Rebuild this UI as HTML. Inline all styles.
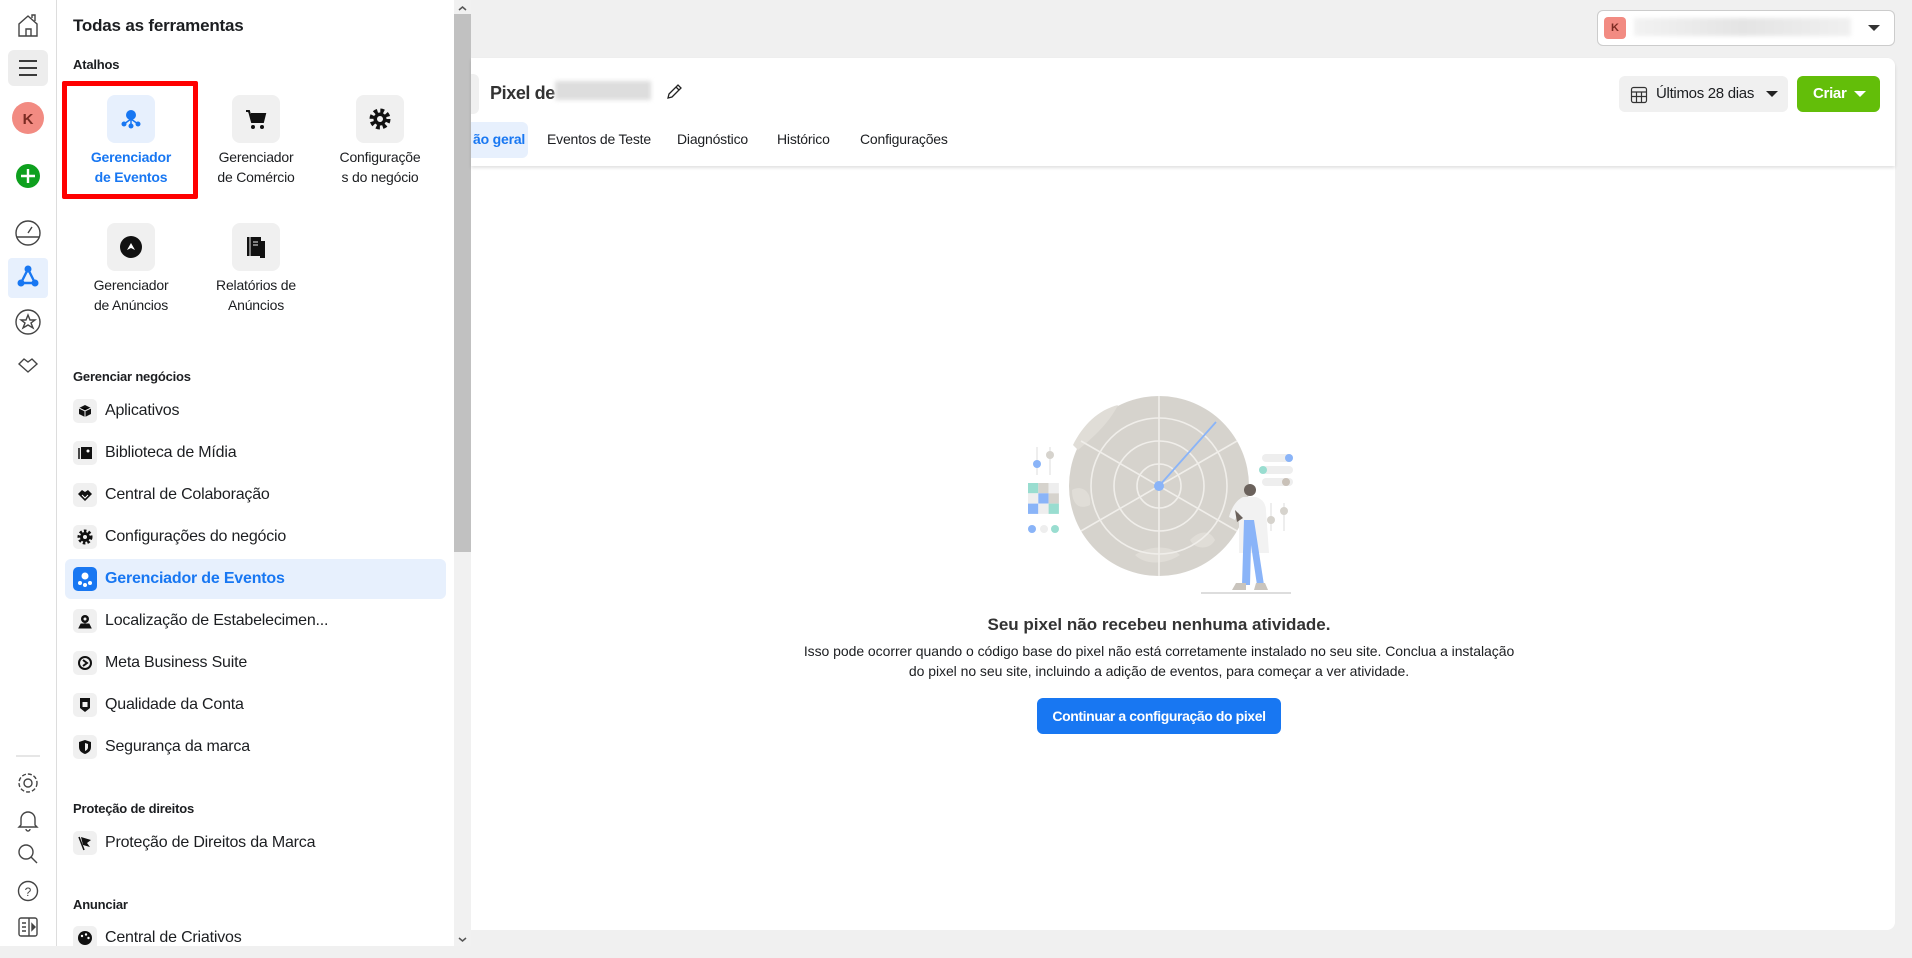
<!DOCTYPE html>
<html><head><meta charset="utf-8"><style>
*{box-sizing:border-box;margin:0;padding:0}
body{width:1912px;height:946px;overflow:hidden;background:#f0f0f0;font-family:"Liberation Sans",sans-serif;color:#1c1e21;position:relative}
.abs{position:absolute}
.rail{left:0;top:0;width:57px;height:946px;background:#fff;border-right:1px solid #ddd}
.drawer{left:57px;top:0;width:397px;height:946px;background:#fff}
.sb{left:454px;top:0;width:17px;height:946px;background:#f1f1f1}
.thumb{left:454px;top:14px;width:17px;height:538px;background:#c1c1c1}
.card{left:471px;top:58px;width:1424px;height:872px;background:#fff;border-radius:0 8px 8px 0}
.hdr{left:471px;top:58px;width:1424px;height:108px;background:#fff;box-shadow:0 2px 3px rgba(0,0,0,.12);border-radius:0 8px 0 0}
.tile{width:48px;height:48px;border-radius:8px;background:#f0f0f0;display:flex;align-items:center;justify-content:center}
.tlab{width:130px;text-align:center;font-size:14px;line-height:20px;color:#1c1e21;letter-spacing:-.2px}
.sec{left:73px;font-size:13px;font-weight:bold;letter-spacing:-.2px}
.item{left:65px;width:381px;height:40px;border-radius:6px;display:flex;align-items:center;padding-left:8px;font-size:16px;letter-spacing:-.2px}
.item .ic{width:24px;height:24px;border-radius:5px;background:#f0f0f0;margin-right:8px;display:flex;align-items:center;justify-content:center}
.tab{top:131px;font-size:14px;color:#1c1e21;letter-spacing:-.2px}
</style></head><body>
<div class="abs rail"></div>
<svg class="abs" style="left:0;top:0" width="57" height="946" fill="none" stroke="#444" stroke-width="1.4">
<path d="M19 36V24l9-8 9 8v12zM26 36v-7h5v7M32 18v-3h3v6"/>
<rect x="8" y="50" width="40" height="36" rx="6" fill="#ededed" stroke="none"/>
<path d="M19 61h18M19 68h18M19 75h18" stroke="#222" stroke-width="1.8"/>
<circle cx="28" cy="118" r="16" fill="#f28b82" stroke="none"/>
<text x="28" y="124" font-size="15" font-weight="bold" fill="#7a2b22" stroke="none" text-anchor="middle" font-family="Liberation Sans">K</text>
<circle cx="28" cy="176" r="12" fill="#0ea01e" stroke="none"/>
<path d="M28 169v14M21 176h14" stroke="#fff" stroke-width="2.4"/>
<circle cx="28" cy="233" r="12"/><path d="M17 237h22M28 233l4-6"/>
<rect x="8" y="258" width="40" height="40" rx="4" fill="#e7f0fd" stroke="none"/>
<path d="M28 269l-7 14h14z" stroke="#1877f2" stroke-width="2.4"/>
<circle cx="28" cy="269" r="3.5" fill="#1877f2" stroke="none"/><circle cx="21" cy="283" r="3.5" fill="#1877f2" stroke="none"/><circle cx="35" cy="283" r="3.5" fill="#1877f2" stroke="none"/>
<circle cx="28" cy="322" r="12"/><path d="M28 315l2 5h5l-4 3 2 5-5-3-5 3 2-5-4-3h5z"/>
<path d="M19 364l5-5 4 3 4-3 5 5-9 8z"/>
<path d="M16 756h24" stroke="#ddd"/>
<circle cx="28" cy="783" r="4"/><circle cx="28" cy="783" r="9" stroke-dasharray="4 2"/>
<path d="M21 825v-6a7 7 0 0 1 14 0v6l2 2H19zM26 829a2 2 0 0 0 4 0"/>
<circle cx="26" cy="852" r="7"/><path d="M31 857l6 6"/>
<circle cx="28" cy="891" r="9.5"/><text x="28" y="896" font-size="12" fill="#444" stroke="none" text-anchor="middle" font-family="Liberation Sans">?</text>
<rect x="19" y="918" width="18" height="18" rx="2"/><path d="M29 918v18M22 923h4M22 927h4M22 931h4"/><path d="M32 924l3 3-3 3z" fill="#444"/>
</svg>

<div class="abs drawer"></div>
<div class="abs sb"></div><div class="abs thumb"></div>
<svg class="abs" style="left:454px;top:0" width="17" height="946"><path d="M5 10l3.5-3 3.5 3" stroke="#555" fill="none" stroke-width="1.5"/><path d="M5 938l3.5 3 3.5-3" stroke="#555" fill="none" stroke-width="1.5"/></svg>

<div class="abs" style="left:73px;top:16px;font-size:17px;font-weight:bold;letter-spacing:-.2px">Todas as ferramentas</div>
<div class="abs sec" style="top:57px">Atalhos</div>

<div class="abs" style="left:62px;top:81px;width:136px;height:118px;border:5px solid #f00;border-radius:2px"></div>
<div class="abs tile" style="left:107px;top:95px;background:#e7f0fd"><svg width="24" height="24"><circle cx="12" cy="8" r="5" fill="#1877f2"/><path d="M12 12v7M12 12l-7 5M12 12l7 5" stroke="#1877f2" stroke-width="1.5"/><circle cx="5" cy="17" r="2.5" fill="#1877f2"/><circle cx="19" cy="17" r="2.5" fill="#1877f2"/><circle cx="12" cy="19" r="2.5" fill="#1877f2"/></svg></div>
<div class="abs tlab" style="left:66px;top:147px;color:#1877f2;font-weight:bold">Gerenciador<br>de Eventos</div>
<div class="abs tile" style="left:232px;top:95px"><svg width="24" height="24"><path d="M2 4h3l3 11h11l2-8H7" fill="#111" stroke="#111" stroke-width="2"/><circle cx="9" cy="20" r="2" fill="#111"/><circle cx="18" cy="20" r="2" fill="#111"/></svg></div>
<div class="abs tlab" style="left:191px;top:147px">Gerenciador<br>de Comércio</div>
<div class="abs tile" style="left:356px;top:95px"><svg width="24" height="24"><circle cx="12" cy="12" r="8" fill="none" stroke="#111" stroke-width="5" stroke-dasharray="3.5 2.8"/><circle cx="12" cy="12" r="6.5" fill="#111"/><circle cx="12" cy="12" r="3" fill="#f0f0f0"/></svg></div>
<div class="abs tlab" style="left:315px;top:147px">Configuraçõe<br>s do negócio</div>
<div class="abs tile" style="left:107px;top:223px"><svg width="24" height="24"><circle cx="12" cy="12" r="11" fill="#111"/><path d="M8 15l4-7 4 7-4-2z" fill="#fff"/></svg></div>
<div class="abs tlab" style="left:66px;top:275px">Gerenciador<br>de Anúncios</div>
<div class="abs tile" style="left:232px;top:223px"><svg width="24" height="24"><rect x="3" y="2" width="14" height="19" fill="#111"/><rect x="16" y="6" width="5" height="17" fill="#111"/><path d="M6 2v19M9 7h5M9 10h5" stroke="#f0f0f0"/></svg></div>
<div class="abs tlab" style="left:191px;top:275px">Relatórios de<br>Anúncios</div>

<div class="abs sec" style="top:369px">Gerenciar negócios</div>
<div class="abs item" style="top:391px"><span class="ic"><svg width="14" height="14"><path d="M7 1l6 3v6l-6 3-6-3V4z" fill="#111"/><path d="M1 4l6 3 6-3M7 7v6" stroke="#f0f0f0"/></svg></span>Aplicativos</div>
<div class="abs item" style="top:433px"><span class="ic"><svg width="14" height="14"><rect x="3" y="1" width="11" height="12" fill="#111"/><path d="M1 2v11" stroke="#111" stroke-width="1.5"/><circle cx="10" cy="5" r="1.5" fill="#fff"/></svg></span>Biblioteca de Mídia</div>
<div class="abs item" style="top:475px"><span class="ic"><svg width="16" height="14"><path d="M1 6l4-4 3 2 3-2 4 4-7 7z" fill="#111"/><path d="M5 7l3 3 3-3" stroke="#fff" fill="none"/></svg></span>Central de Colaboração</div>
<div class="abs item" style="top:517px"><span class="ic"><svg width="16" height="16"><circle cx="8" cy="8" r="6" fill="none" stroke="#111" stroke-width="3" stroke-dasharray="2.5 2"/><circle cx="8" cy="8" r="5" fill="#111"/><circle cx="8" cy="8" r="2" fill="#f0f0f0"/></svg></span>Configurações do negócio</div>
<div class="abs item" style="top:559px;background:#e7f0fd;color:#1877f2;font-weight:bold"><span class="ic" style="background:#1877f2"><svg width="16" height="16"><circle cx="8" cy="5" r="3.5" fill="#fff"/><circle cx="3" cy="12" r="2" fill="#fff"/><circle cx="13" cy="12" r="2" fill="#fff"/><circle cx="8" cy="14" r="2" fill="#fff"/></svg></span>Gerenciador de Eventos</div>
<div class="abs item" style="top:601px"><span class="ic"><svg width="16" height="16"><circle cx="8" cy="6" r="4" fill="#111"/><circle cx="8" cy="6" r="1.5" fill="#f0f0f0"/><path d="M8 11v-2M2 15h12l-2-4H4z" fill="#111" stroke="#111"/></svg></span>Localização de Estabelecimen...</div>
<div class="abs item" style="top:643px"><span class="ic"><svg width="16" height="16"><circle cx="8" cy="8" r="6" fill="none" stroke="#111" stroke-width="2"/><path d="M6 5l4 3-4 3" stroke="#111" stroke-width="2" fill="none"/></svg></span>Meta Business Suite</div>
<div class="abs item" style="top:685px"><span class="ic"><svg width="16" height="16"><path d="M3 1h10v10l-5 4-5-4z" fill="#111"/><rect x="5.5" y="5" width="5" height="5" fill="#f0f0f0"/></svg></span>Qualidade da Conta</div>
<div class="abs item" style="top:727px"><span class="ic"><svg width="16" height="16"><path d="M8 1l6 2v5c0 4-3 6-6 7-3-1-6-3-6-7V3z" fill="#111"/><path d="M8 4l3 1v3c0 2-1 3-3 4z" fill="#f0f0f0"/></svg></span>Segurança da marca</div>

<div class="abs sec" style="top:801px">Proteção de direitos</div>
<div class="abs item" style="top:823px"><span class="ic"><svg width="16" height="16"><path d="M2 2l5 13" stroke="#111" stroke-width="1.5"/><path d="M4 2l10 3-4 3 3 4-7-2z" fill="#111"/></svg></span>Proteção de Direitos da Marca</div>
<div class="abs sec" style="top:897px">Anunciar</div>
<div class="abs item" style="top:918px"><span class="ic"><svg width="16" height="16"><circle cx="8" cy="8" r="7" fill="#111"/><circle cx="5" cy="6" r="1.2" fill="#fff"/><circle cx="9" cy="4.5" r="1.2" fill="#fff"/><circle cx="11.5" cy="8" r="1.2" fill="#fff"/></svg></span>Central de Criativos</div>

<!-- main -->
<div class="abs" style="left:1597px;top:10px;width:298px;height:36px;background:#fff;border:1px solid #ccc;border-radius:6px"></div>
<div class="abs" style="left:1604px;top:17px;width:22px;height:22px;border-radius:4px;background:#f28b82;color:#7a2b22;font-size:11px;font-weight:bold;text-align:center;line-height:22px">K</div>
<div class="abs" style="left:1634px;top:18px;width:217px;height:18px;background:linear-gradient(90deg,#f2f2f2,#e4e4e4 50%,#f0f0f0);filter:blur(2px)"></div>
<svg class="abs" style="left:1867px;top:23px" width="14" height="10"><path d="M1 2h12l-6 6z" fill="#333"/></svg>

<div class="abs card"></div>
<div class="abs hdr"></div>
<div class="abs" style="left:471px;top:74px;width:8px;height:40px;background:#f0f0f0;border-radius:0 6px 6px 0"></div>
<div class="abs" style="left:490px;top:83px;font-size:18px;font-weight:bold;letter-spacing:-.4px;color:#333">Pixel de</div>
<div class="abs" style="left:555px;top:81px;width:96px;height:19px;background:#ddd;filter:blur(2px)"></div>
<svg class="abs" style="left:664px;top:81px" width="20" height="20" fill="none" stroke="#222" stroke-width="1.3"><path d="M4 17l1-4 9-9 3 3-9 9z M12 6l3 3"/></svg>
<div class="abs" style="left:471px;top:122px;width:57px;height:36px;background:#e7f0fd;border-radius:0 6px 6px 0"></div>
<div class="abs tab" style="left:473px;color:#1877f2;font-weight:bold">ão geral</div>
<div class="abs tab" style="left:547px">Eventos de Teste</div>
<div class="abs tab" style="left:677px">Diagnóstico</div>
<div class="abs tab" style="left:777px">Histórico</div>
<div class="abs tab" style="left:860px">Configurações</div>

<div class="abs" style="left:1619px;top:76px;width:169px;height:36px;background:#f0f0f0;border-radius:6px"></div>
<svg class="abs" style="left:1630px;top:86px" width="18" height="18" fill="none" stroke="#333" stroke-width="1.2"><rect x="1.5" y="1.5" width="15" height="15" rx="2"/><path d="M1.5 6h15M1.5 10.5h15M6.5 6v10.5M11.5 6v10.5"/></svg>
<div class="abs" style="left:1656px;top:85px;font-size:15px;letter-spacing:-.3px">Últimos 28 dias</div>
<svg class="abs" style="left:1765px;top:89px" width="14" height="10"><path d="M1 2h12l-6 6z" fill="#222"/></svg>
<div class="abs" style="left:1797px;top:76px;width:83px;height:36px;background:#63be09;border-radius:6px"></div>
<div class="abs" style="left:1813px;top:85px;font-size:15px;font-weight:bold;color:#fff;letter-spacing:-.3px">Criar</div>
<svg class="abs" style="left:1853px;top:89px" width="14" height="10"><path d="M1 2h12l-6 6z" fill="#fff"/></svg>

<!-- illustration -->
<svg class="abs" style="left:960px;top:380px" width="360" height="220">
<circle cx="199" cy="106" r="90" fill="#d6d3cd"/>
<path d="M118 70c12-10 30-25 40-45-20 5-35 20-45 40z M112 110c8-5 20 0 18 15-10 5-18 0-18-15z M175 175c15-10 35-10 45 0-15 10-35 10-45 0z M230 160c10-10 20-10 25 0-5 10-20 10-25 0z" fill="#e0ddd7"/>
<g stroke="#f0eeea" stroke-width="1.6" fill="none"><circle cx="199" cy="106" r="22"/><circle cx="199" cy="106" r="45"/><circle cx="199" cy="106" r="68"/><path d="M199 16v180M121 61l156 90M121 151l156-90"/></g>
<path d="M199 106l57-64" stroke="#8ab4f8" stroke-width="1.8"/><circle cx="199" cy="106" r="5" fill="#8ab4f8"/>
<path d="M77 67v28M90 67v28" stroke="#eee" stroke-width="2"/><circle cx="77" cy="84" r="4" fill="#8ab4f8"/><circle cx="90" cy="75" r="4" fill="#d6d3cd"/>
<rect x="68" y="103" width="10.3" height="10.3" fill="#99ddd0"/><rect x="78.3" y="103" width="10.3" height="10.3" fill="#d6d3cd"/><rect x="88.6" y="103" width="10.3" height="10.3" fill="#eee"/>
<rect x="68" y="113.3" width="10.3" height="10.3" fill="#eee"/><rect x="78.3" y="113.3" width="10.3" height="10.3" fill="#8ab4f8"/><rect x="88.6" y="113.3" width="10.3" height="10.3" fill="#d6d3cd"/>
<rect x="68" y="123.6" width="10.3" height="10.3" fill="#8ab4f8"/><rect x="78.3" y="123.6" width="10.3" height="10.3" fill="#eee"/><rect x="88.6" y="123.6" width="10.3" height="10.3" fill="#99ddd0"/>
<circle cx="72" cy="149" r="4" fill="#8ab4f8"/><circle cx="84" cy="149" r="4" fill="#eee"/><circle cx="95" cy="149" r="4" fill="#99ddd0"/>
<rect x="302" y="74" width="31" height="8" rx="4" fill="#eee"/>
<rect x="302" y="86" width="31" height="8" rx="4" fill="#eee"/>
<rect x="302" y="98" width="31" height="8" rx="4" fill="#eee"/>
<circle cx="329" cy="78" r="4" fill="#8ab4f8"/>
<circle cx="303" cy="90" r="4" fill="#99ddd0"/>
<circle cx="326" cy="102" r="4" fill="#c9c1b8"/>
<path d="M311 123v28M324 123v28" stroke="#eee" stroke-width="2"/>
<circle cx="311" cy="140" r="4" fill="#d6d3cd"/><circle cx="324" cy="131" r="4" fill="#d6d3cd"/>
<path d="M241 213h90" stroke="#ddd" stroke-width="2"/>
<circle cx="290" cy="110" r="6" fill="#6b625c"/>
<path d="M283 117c-7 3-12 12-14 20l6 3 4-8v41h30l-3-42c0-8-4-12-10-14z" fill="#f2f2f2"/>
<path d="M275 130l8 8-6 4z" fill="#6b625c"/>
<path d="M284 140h10l10 65h-7l-6-40-1 40h-8z" fill="#8ab4f8"/>
<path d="M276 203h10v7h-14zM296 203h9l3 7h-14z" fill="#c9c4bd"/>
</svg>

<div class="abs" style="left:760px;top:615px;width:798px;text-align:center;font-size:17px;font-weight:bold;color:#333">Seu pixel não recebeu nenhuma atividade.</div>
<div class="abs" style="left:740px;top:641px;width:838px;text-align:center;font-size:14px;line-height:20px;color:#1c1e21;letter-spacing:-.05px">Isso pode ocorrer quando o código base do pixel não está corretamente instalado no seu site. Conclua a instalação<br>do pixel no seu site, incluindo a adição de eventos, para começar a ver atividade.</div>
<div class="abs" style="left:1037px;top:698px;width:244px;height:36px;background:#1877f2;border-radius:6px;color:#fff;font-size:14px;font-weight:bold;text-align:center;line-height:36px;letter-spacing:-.4px">Continuar a configuração do pixel</div>
</body></html>
